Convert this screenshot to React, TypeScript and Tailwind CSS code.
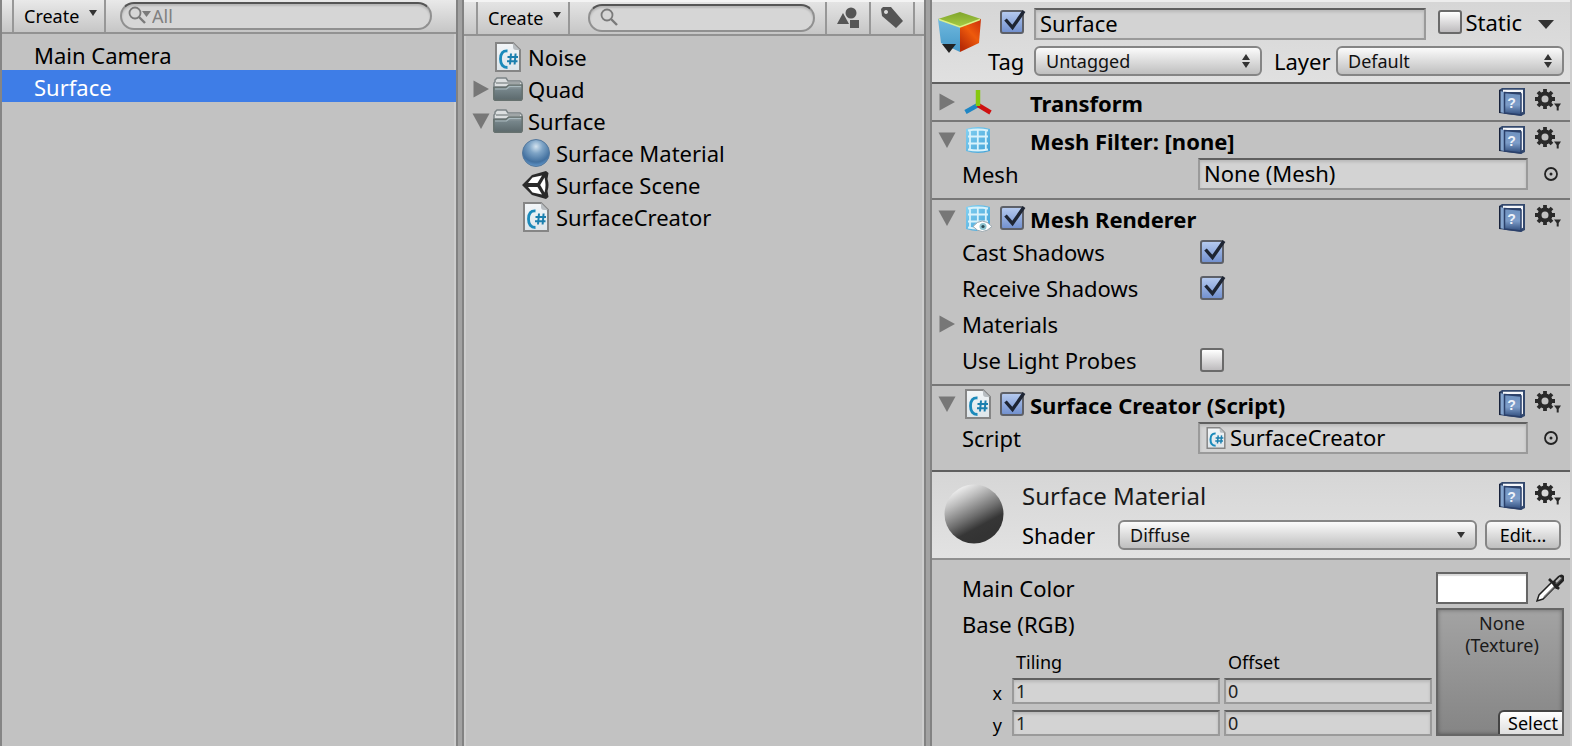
import React, { useState } from "react";

const FONT = "font-['Noto_Sans','Open_Sans',sans-serif]";

function Fold({ open = false }: { open?: boolean }) {
  return (
    <svg className="block size-[18px] shrink-0" viewBox="0 0 18 18" aria-hidden="true">
      <path d={open ? "M0.5 1.500h17L9 17z" : "M1.5 0.5v17L17 9z"} fill="#777" />
    </svg>
  );
}

function ScriptIcon({ className = "w-[26px] h-[30px]" }: { className?: string }) {
  return (
    <svg className={`block shrink-0 ${className}`} viewBox="0 0 26 30" aria-hidden="true">
      <defs>
        <linearGradient id="paper" x1="0" y1="0" x2="0" y2="1">
          <stop offset="0" stopColor="#f3f6f8" />
          <stop offset="1" stopColor="#dde5ea" />
        </linearGradient>
      </defs>
      <path d="M1 1h17l7 7v21H1z" fill="url(#paper)" stroke="#858585" strokeWidth="2" />
      <path d="M18 1l7 7h-4q-3 0-3-3z" fill="#b9bec2" />
      <path d="M12.500 9Q5.500 8.500 5.500 17t7 8.500" fill="none" stroke="#1b8abb" strokeWidth="2.800" />
      <path d="M16 11.500l-1 11M20.600 11.500l-1 11M12.500 15h10.500M12 19.200h10.500" stroke="#1b7fae" strokeWidth="2" />
    </svg>
  );
}

function FolderIcon() {
  return (
    <svg className="block h-6 w-[30px] shrink-0" viewBox="0 0 30 24" aria-hidden="true">
      <defs>
        <linearGradient id="folder" x1="0" y1="0" x2="0" y2="1">
          <stop offset="0" stopColor="#9aa5a8" />
          <stop offset="0.300" stopColor="#76858a" />
          <stop offset="1" stopColor="#5b696c" />
        </linearGradient>
      </defs>
      <path d="M2 5V3l2-2h9l2 3h12l2 2v4H1V6z" fill="#dcdfe0" stroke="#7c8486" strokeWidth="1.500" />
      <path d="M3 6h24" stroke="#8c9395" strokeWidth="1.500" />
      <path d="M0.800 10.500h12l3-2.500h13.400v14l-1 1.200H1.800l-1-1z" fill="url(#folder)" stroke="#66716f" strokeWidth="1.500" />
      <path d="M2 12h11.500l3-2.500H28" fill="none" stroke="#a9b9be" strokeWidth="1.200" />
    </svg>
  );
}

function BlueSphere() {
  return (
    <svg className="block size-7 shrink-0" viewBox="0 0 28 28" aria-hidden="true">
      <defs>
        <radialGradient id="blue" cx="0.500" cy="0.260" r="0.720">
          <stop offset="0" stopColor="#d3e3ef" />
          <stop offset="0.350" stopColor="#7ea4c6" />
          <stop offset="0.800" stopColor="#42709f" />
          <stop offset="1" stopColor="#5f93c6" />
        </radialGradient>
      </defs>
      <circle cx="14" cy="14" r="13.500" fill="url(#blue)" stroke="#54789c" />
    </svg>
  );
}

function SceneIcon() {
  return (
    <svg className="block size-7 shrink-0" viewBox="0 0 28 28" aria-hidden="true">
      <path d="M0 14L10 4l14-4 2.500 2-1 6q2 6 0 12l1 6-2.500 2L10 24z" fill="#2a2a2a" />
      <path d="M10.500 6.500L20 4.500l-4.500 7.500H6z" fill="#fff" />
      <path d="M6 16h9.500l4.500 7.500-9.500-2z" fill="#fff" />
      <path d="M22.500 6.500q2 7.500 0 15L18.200 14z" fill="#fff" />
    </svg>
  );
}

function MeshIcon({ eye = false }: { eye?: boolean }) {
  return (
    <svg className="block h-7 w-7 shrink-0" viewBox="0 0 28 28" aria-hidden="true">
      <defs>
        <linearGradient id="mesh" x1="0" y1="0" x2="1" y2="1">
          <stop offset="0" stopColor="#86d3f3" />
          <stop offset="0.500" stopColor="#62b9e4" />
          <stop offset="1" stopColor="#3fa0d6" />
        </linearGradient>
      </defs>
      <path d="M2 3q12-4 24 0v22q-12 4-24 0z" fill="url(#mesh)" />
      <path d="M6 4v20M13.800 4v21M21.800 4v20M4 4.500q10-2 20 0M4 10.500h20M4 17.500h20M4 23.500q10 2 20 0" fill="none" stroke="#d9f2fb" strokeWidth="1.800" />
      {eye && (
        <>
          <path d="M9 22.500q9-11 19 0-10 10-19 0z" fill="#fff" stroke="#9aa7ae" />
          <circle cx="19" cy="22.500" r="3.500" fill="#8cc3cf" />
          <circle cx="19" cy="22.500" r="1.600" fill="#2c4852" />
        </>
      )}
    </svg>
  );
}

function AxesIcon() {
  return (
    <svg className="block size-7 shrink-0" viewBox="0 0 28 28" fill="none" strokeWidth="4.500" aria-hidden="true">
      <path d="M14 17L1.500 24" stroke="#1f86c4" />
      <path d="M14 17l12.500 7.500" stroke="#cf1111" />
      <path d="M14 18V2" stroke="#87c80f" />
    </svg>
  );
}

function CubeIcon() {
  return (
    <svg className="block h-[42px] w-11 shrink-0" viewBox="0 0 44 42" aria-hidden="true">
      <defs>
        <linearGradient id="cubeRight" x1="1" y1="0" x2="0.300" y2="1">
          <stop offset="0" stopColor="#c92f0a" />
          <stop offset="0.500" stopColor="#ee5a0c" />
          <stop offset="1" stopColor="#b92c06" />
        </linearGradient>
        <linearGradient id="cubeTop" x1="0" y1="0" x2="0" y2="1">
          <stop offset="0" stopColor="#80a52c" />
          <stop offset="1" stopColor="#a6cc45" />
        </linearGradient>
        <linearGradient id="cubeLeft" x1="0" y1="0" x2="0" y2="1">
          <stop offset="0" stopColor="#70b9de" />
          <stop offset="1" stopColor="#4598c8" />
        </linearGradient>
      </defs>
      <path d="M22 0L43 7 22 15 0 7z" fill="url(#cubeTop)" />
      <path d="M0 7l22 8v25L3 31z" fill="url(#cubeLeft)" />
      <path d="M43 7L22 15v25l19-9z" fill="url(#cubeRight)" />
      <path d="M1 7.500l21 7.500 20-7.500" fill="none" stroke="#dcf08a" strokeWidth="1.500" />
      <path d="M4 32h14l-7 9z" fill="#222" />
    </svg>
  );
}

function BookIcon() {
  return (
    <svg className="block h-7 w-[26px]" viewBox="0 0 26 28" aria-hidden="true">
      <defs>
        <linearGradient id="book" x1="0" y1="0" x2="0" y2="1">
          <stop offset="0" stopColor="#6f92c0" />
          <stop offset="0.550" stopColor="#7d9dc9" />
          <stop offset="1" stopColor="#2f4c7c" />
        </linearGradient>
      </defs>
      <path d="M3 0h23v26l-4 2-22-3V2z" fill="#33486d" />
      <path d="M4 1.800h20v22l-2 1V4H4z" fill="#f4f6fa" />
      <path d="M1 3l4 1v21l-4-1z" fill="#86a6cf" />
      <path d="M0 2h1.500v23H0z" fill="#17213a" />
      <path d="M5.500 4.500L22 6v21L5.500 25z" fill="url(#book)" stroke="#2b406a" strokeWidth="1.500" />
      <text x="12.500" y="19.500" textAnchor="middle" fontSize="14" fontWeight="700" fill="#eef3fa" fontFamily="Liberation Sans, sans-serif">?</text>
    </svg>
  );
}

function GearIcon() {
  return (
    <svg className="block h-[22px] w-[26px]" viewBox="0 0 26 22" aria-hidden="true">
      <circle cx="10" cy="10" r="5.500" fill="none" stroke="#2a2a2a" strokeWidth="4" />
      <path
        d="M10 0v4M10 16v4M0 10h4M16 10h4M3 3l3 3M14 14l3 3M17 3l-3 3M6 14l-3 3"
        stroke="#2a2a2a"
        strokeWidth="3.800"
      />
      <path d="M19 14.500h7l-2.300 3.500v3.500h-2V18z" fill="#2a2a2a" />
    </svg>
  );
}

function Magnifier({ menu = false }: { menu?: boolean }) {
  return (
    <svg className="block h-5 w-6 shrink-0" viewBox="0 0 24 20" fill="none" stroke="#7a7a7a" strokeWidth="1.800" aria-hidden="true">
      <circle cx="7" cy="7" r="5.500" />
      <path d="M11 11l6 6" strokeWidth="2.400" />
      {menu && <path d="M14 5h9l-4.500 6z" fill="#7a7a7a" stroke="none" />}
    </svg>
  );
}

function Eyedropper() {
  return (
    <svg className="block h-[30px] w-7" viewBox="0 0 28 30" aria-hidden="true">
      <path d="M1 28l2-6L16 9l4 4L7 26z" fill="#fff" stroke="#222" strokeWidth="1.500" />
      <path d="M8 24L19 13" stroke="#777" strokeWidth="1.500" />
      <path d="M13 6l10 10M17 10l6-6q3-2.500 4 0t-1 4l-6 6z" fill="#555" stroke="#222" strokeWidth="2.600" />
      <path d="M20 9l4.500-4.500" stroke="#bbb" strokeWidth="2" />
    </svg>
  );
}

function Tick({ id, label, initial = false }: { id: string; label?: string; initial?: boolean }) {
  const [on, setOn] = useState(initial);
  return (
    <span className="relative block size-6 shrink-0">
      <input
        id={id}
        type="checkbox"
        aria-label={label}
        checked={on}
        onChange={() => setOn(!on)}
        className="block size-6 appearance-none rounded-[3px] border-2 border-[#6a6a6a] bg-linear-to-b from-white to-[#bdbbbd] checked:border-[#5d6068] checked:from-[#b4c9ee] checked:to-[#7391cf]"
      />
      {on && (
        <svg className="pointer-events-none absolute top-0 left-0 h-6 w-[26px]" viewBox="0 0 26 24" aria-hidden="true">
          <path d="M5.500 9.500L12.500 17.500L24 1" fill="none" stroke="#1e2533" strokeWidth="3.400" />
        </svg>
      )}
    </span>
  );
}

function Popup({ id, value, single = false }: { id: string; value: string; single?: boolean }) {
  return (
    <span className="relative block min-w-0 flex-1">
      <select
        id={id}
        className="block h-[30px] w-full appearance-none rounded-md border-2 border-[#858585] bg-linear-to-b from-[#fbfbfb] to-[#bfbfbf] pl-[10px] text-[18px] leading-[24px] text-[#111]"
      >
        <option>{value}</option>
      </select>
      <svg className="pointer-events-none absolute top-2 right-3 h-[14px] w-2" viewBox="0 0 8 14" fill="#333" aria-hidden="true">
        {single ? <path d="M0 4h8L4 10z" /> : <path d="M0 6h8L4 0zM0 8h8L4 14z" />}
      </svg>
    </span>
  );
}

const well =
  "border-2 border-[#9a9a9a] border-t-[#5f5f5f] bg-[#d3d3d3] shadow-[inset_0_2px_3px_rgba(0,0,0,0.12)]";

function CreateButton() {
  return (
    <button className="flex w-[94px] items-center gap-[10px] border-x-2 border-[#979797] pl-[10px] text-[18px] leading-none">
      Create
      <svg className="mb-[6px] h-[6px] w-2 shrink-0" viewBox="0 0 8 6" fill="#333" aria-hidden="true">
        <path d="M0 0h8L4 6z" />
      </svg>
    </button>
  );
}

const searchBox =
  "flex h-7 min-w-0 flex-1 items-center rounded-full border-2 border-[#909090] border-t-[#555] bg-[#d6d6d6] shadow-[inset_0_2px_2px_rgba(0,0,0,0.14)]";

function Hierarchy() {
  return (
    <section className="min-w-0 border-x-2 border-l-[#858585] border-r-[#cdcdcd]">
      <div className="-mr-[2px] flex h-[34px] border-b-2 border-[#929292] bg-linear-to-b from-[#e9e9e9] to-[#c6c6c6] pr-6 pl-[10px]">
        <CreateButton />
        <div className={`mt-[2px] ml-[14px] ${searchBox} pl-[6px]`}>
          <Magnifier menu />
          <input aria-label="Search hierarchy" placeholder="All" className="min-w-0 flex-1 bg-transparent text-[18px] leading-none outline-none placeholder:text-[#808080]" />
        </div>
      </div>
      <ul className="-mr-[2px] pt-1 text-[22px] leading-[34px]">
        <li className="h-8 pl-8">Main Camera</li>
        <li className="h-8 bg-[#3e7de7] pl-8 text-white">Surface</li>
      </ul>
    </section>
  );
}

type Item = { name: string; icon: React.ReactNode; fold?: "open" | "closed"; child?: boolean };

const items: Item[] = [
  { name: "Noise", icon: <ScriptIcon /> },
  { name: "Quad", icon: <FolderIcon />, fold: "closed" },
  { name: "Surface", icon: <FolderIcon />, fold: "open" },
  { name: "Surface Material", icon: <BlueSphere />, child: true },
  { name: "Surface Scene", icon: <SceneIcon />, child: true },
  { name: "SurfaceCreator", icon: <ScriptIcon />, child: true },
];

function Divider() {
  return <div className="border-x-2 border-[#828282] bg-[#a2a2a2]" />;
}

function Project() {
  return (
    <section className="min-w-0 border-x-2 border-[#cdcdcd]">
      <div className="-mx-[2px] flex h-9 border-t-2 border-b-2 border-t-[#f4f4f4] border-b-[#929292] bg-linear-to-b from-[#e4e4e4] to-[#c6c6c6] pr-[9px] pl-3">
        <CreateButton />
        <div className={`mt-[2px] mr-[10px] ml-[18px] ${searchBox} pl-[10px]`}>
          <Magnifier />
          <input aria-label="Search project" className="min-w-0 flex-1 bg-transparent text-[18px] leading-none outline-none" />
        </div>
        <button aria-label="Filter by type" className="flex w-11 items-center justify-center border-l-2 border-[#979797]">
          <svg className="size-[22px]" viewBox="0 0 22 22" fill="#555" aria-hidden="true">
            <circle cx="14" cy="6" r="5.500" />
            <path d="M0 17L6 6l6 11z" />
            <path d="M13 13h9v8h-9z" />
          </svg>
        </button>
        <button aria-label="Filter by label" className="flex w-[46px] items-center justify-center border-x-2 border-[#979797]">
          <svg className="size-[22px]" viewBox="0 0 22 22" aria-hidden="true">
            <path fillRule="evenodd" d="M0 2l2-2h8l12 14-7 7L1 9zM5 3a2 2 0 1 0 0.010 0z" fill="#555" />
          </svg>
        </button>
      </div>
      <ul className="pt-[5px] text-[22px] leading-[32px]">
        {items.map((it) => (
          <li key={it.name} className={`flex h-8 items-center ${it.child ? "pl-[34px]" : "pl-[6px]"}`}>
            <span className="w-5">{it.fold && <Fold open={it.fold === "open"} />}</span>
            <span className="flex w-8 justify-center">{it.icon}</span>
            <span className="ml-1">{it.name}</span>
          </li>
        ))}
      </ul>
    </section>
  );
}

function Tools() {
  return (
    <div className="ml-auto flex items-start gap-[10px]">
      <button aria-label="Open reference">
        <BookIcon />
      </button>
      <button aria-label="Component menu" className="pt-px">
        <GearIcon />
      </button>
    </div>
  );
}

function ComponentHeader({ title, icon, open = false, tickId }: { title: string; icon: React.ReactNode; open?: boolean; tickId?: string }) {
  return (
    <div className="flex h-9 items-center pr-[9px] pl-[6px]">
      <Fold open={open} />
      <span className="ml-2 flex w-7 justify-center">{icon}</span>
      <span className="ml-2 w-6">{tickId && <Tick id={tickId} label={`${title} enabled`} initial />}</span>
      <h2 className="ml-[6px] pt-[2px] text-[22px] leading-[34px] font-bold">{title}</h2>
      <Tools />
    </div>
  );
}

function ObjectField({ id, label, value, icon }: { id: string; label: string; value: string; icon?: React.ReactNode }) {
  return (
    <div className="flex h-8 items-center pr-[11px] pl-[30px]">
      <label htmlFor={id} className="w-[236px] shrink-0 leading-[30px]">{label}</label>
      <div className={`flex h-8 min-w-0 flex-1 items-center gap-1 pl-1 ${well}`}>
        {icon}
        <input id={id} readOnly defaultValue={value} className="h-7 w-full min-w-0 bg-transparent pb-[2px] outline-none" />
      </div>
      <button aria-label={`Pick ${label}`} className="ml-[15px]">
        <svg className="block size-4" viewBox="0 0 16 16" aria-hidden="true">
          <circle cx="8" cy="8" r="6" fill="none" stroke="#222" strokeWidth="1.800" />
          <circle cx="8" cy="8" r="1.500" fill="#222" />
        </svg>
      </button>
    </div>
  );
}

function TickRow({ id, label, initial }: { id: string; label: string; initial?: boolean }) {
  return (
    <div className="flex h-9 items-center pl-[30px]">
      <label htmlFor={id} className="w-[238px]">{label}</label>
      <Tick id={id} initial={initial} />
    </div>
  );
}

function VectorInput({ label, value }: { label: string; value: string }) {
  return (
    <input aria-label={label} defaultValue={value} className={`h-[26px] w-full min-w-0 pl-[2px] text-[18px] leading-[22px] text-[#222] outline-none ${well}`} />
  );
}

function Inspector() {
  return (
    <section className="min-w-0 border-r-2 border-[#cdcdcd] text-[22px] leading-[32px]">
      <header className="flex h-[84px] border-t-2 border-b-2 border-t-[#ededed] border-b-[#5f5f5f] bg-linear-to-b from-[#d6d6d6] to-[#e0e0e0] pr-[6px] pl-[6px]">
        <div className="pt-[10px]">
          <CubeIcon />
        </div>
        <div className="flex min-w-0 flex-1 flex-col gap-[6px] pt-[6px]">
          <div className="flex h-8 items-center">
            <span className="-mt-1 ml-[18px]">
              <Tick id="active" label="Active" initial />
            </span>
            <input aria-label="Name" defaultValue="Surface" className={`ml-[10px] h-8 min-w-0 flex-1 pb-[2px] pl-1 outline-none ${well}`} />
            <span className="-mt-1 ml-3 flex items-center gap-[3px]">
              <Tick id="static" />
              <label htmlFor="static">Static</label>
            </span>
            <button aria-label="Static options" className="ml-4 w-[26px]">
              <svg className="block h-[9px] w-4" viewBox="0 0 16 9" fill="#333" aria-hidden="true">
                <path d="M0 0h16L8 9z" />
              </svg>
            </button>
          </div>
          <div className="flex h-[30px] items-center">
            <label htmlFor="tag" className="w-[52px] shrink-0 pl-[6px]">Tag</label>
            <Popup id="tag" value="Untagged" />
            <label htmlFor="layer" className="w-[74px] shrink-0 pl-3">Layer</label>
            <Popup id="layer" value="Default" />
          </div>
        </div>
      </header>

      <div className="border-b-2 border-[#777]">
        <ComponentHeader title="Transform" icon={<AxesIcon />} />
      </div>
      <div className="border-b-2 border-[#777] pb-2">
        <ComponentHeader title="Mesh Filter: [none]" icon={<MeshIcon />} open />
        <ObjectField id="mesh-field" label="Mesh" value="None (Mesh)" />
      </div>
      <div className="border-b-2 border-[#777] pb-[6px]">
        <ComponentHeader title="Mesh Renderer" icon={<MeshIcon eye />} open tickId="renderer-on" />
        <div className="-mt-[2px]">
          <TickRow id="cast" label="Cast Shadows" initial />
          <TickRow id="receive" label="Receive Shadows" initial />
          <div className="flex h-9 items-center gap-[6px] pl-[6px]">
            <Fold />
            Materials
          </div>
          <TickRow id="probes" label="Use Light Probes" />
        </div>
      </div>
      <div className="border-b-2 border-[#5f5f5f] pb-4">
        <ComponentHeader title="Surface Creator (Script)" icon={<ScriptIcon />} open tickId="creator-on" />
        <ObjectField id="script-field" label="Script" value="SurfaceCreator" icon={<ScriptIcon className="ml-[2px] h-[22px] w-5" />} />
      </div>

      <div className="flex h-[88px] items-start border-b-2 border-[#8f8f8f] bg-linear-to-b from-[#d6d6d6] to-[#e2e2e2] pt-[6px] pr-[9px] pl-3">
        <svg className="mt-[6px] block size-[60px] shrink-0" viewBox="0 0 60 60" aria-hidden="true">
          <defs>
            <linearGradient id="gray" x1="0.250" y1="0.050" x2="0.680" y2="0.850">
              <stop offset="0" stopColor="#f0f0f0" />
              <stop offset="0.250" stopColor="#bdbdbd" />
              <stop offset="0.600" stopColor="#6d6d6d" />
              <stop offset="0.820" stopColor="#363636" />
              <stop offset="1" stopColor="#333" />
            </linearGradient>
          </defs>
          <circle cx="30" cy="30" r="29.500" fill="url(#gray)" />
        </svg>
        <div className="ml-[18px] min-w-0 flex-1">
          <div className="flex h-9 items-center">
            <h2 className="text-2xl text-[#1a1a1a]">Surface Material</h2>
            <Tools />
          </div>
          <div className="mt-[6px] flex h-[30px] items-center">
            <label htmlFor="shader" className="w-24 shrink-0">Shader</label>
            <Popup id="shader" value="Diffuse" single />
            <button className="ml-2 h-[30px] w-[76px] rounded-md border-2 border-[#858585] bg-linear-to-b from-[#fbfbfb] to-[#bfbfbf] text-[18px] leading-[24px]">
              Edit...
            </button>
          </div>
        </div>
      </div>

      <div className="flex items-start gap-1 pt-3 pr-[6px] pb-[10px] pl-[30px]">
        <div className="min-w-0 flex-1">
          <p>Main Color</p>
          <p className="mt-1">Base (RGB)</p>
          <div className="mt-3 grid grid-cols-[46px_1fr_1fr] items-center gap-x-1 gap-y-[6px] text-[18px] leading-[20px]">
            <span className="col-start-2 pl-1">Tiling</span>
            <span className="pl-1">Offset</span>
            <span className="pt-1 pr-[6px] text-right">x</span>
            <VectorInput label="Tiling x" value="1" />
            <VectorInput label="Offset x" value="0" />
            <span className="pt-1 pr-[6px] text-right">y</span>
            <VectorInput label="Tiling y" value="1" />
            <VectorInput label="Offset y" value="0" />
          </div>
        </div>
        <div className="w-32 shrink-0">
          <div className="flex items-center justify-between">
            <button aria-label="Main Color" className="h-8 w-[92px] border-2 border-[#666] bg-white shadow-[inset_0_2px_1px_rgba(0,0,0,0.15)]" />
            <button aria-label="Pick color">
              <Eyedropper />
            </button>
          </div>
          <div className="mt-1 flex h-32 flex-col justify-between border-2 border-[#666] bg-linear-to-b from-[#a3a3a3] to-[#858585] shadow-[inset_0_0_4px_rgba(0,0,0,0.35)]">
            <p className="pt-[2px] pl-1 text-center text-[18px] leading-[22px] text-[#1a1a1a]">
              None
              <br />
              (Texture)
            </p>
            <button className="h-6 w-16 self-end rounded-tl-md border-t-2 border-l-2 border-[#444] bg-linear-to-b from-white to-[#dedede] pl-1 text-[18px] leading-[22px]">
              Select
            </button>
          </div>
        </div>
      </div>
    </section>
  );
}

export default function App() {
  return (
    <main className={`grid min-h-screen grid-cols-[456fr_8px_460fr_8px_640fr] bg-[#c2c2c2] text-black ${FONT}`}>
      <Hierarchy />
      <Divider />
      <Project />
      <Divider />
      <Inspector />
    </main>
  );
}
